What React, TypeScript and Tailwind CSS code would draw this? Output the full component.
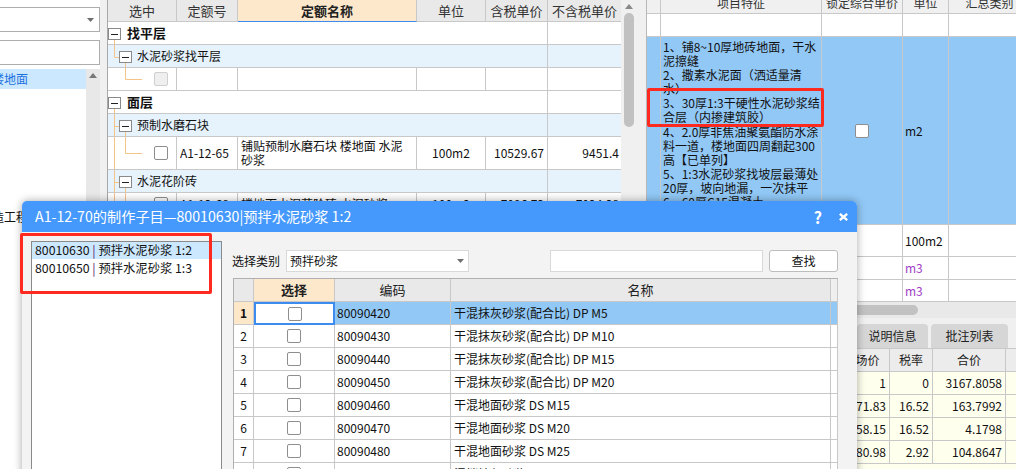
import React from "react"

const OR = "#f6c487"

function Check({ disabled = false }: { disabled?: boolean }) {
  return (
    <span
      className={`inline-block w-[14px] h-[14px] rounded-[2px] border shrink-0 ${
        disabled ? "border-[#cfcfcf] bg-[#efefef]" : "border-[#8e8e8e] bg-white"
      }`}
    />
  )
}

function Box({ x }: { x: number }) {
  return (
    <g>
      <rect x={x + 0.5} y={6.5} width={12} height={11} fill="#fff" stroke="#8a8a8a" />
      <line x1={x + 3} x2={x + 10} y1={12.5} y2={12.5} stroke="#222" />
    </g>
  )
}

function V({ x, y1, y2 }: { x: number; y1: number; y2: number }) {
  return <line x1={x} x2={x} y1={y1} y2={y2} stroke={OR} />
}
function H({ y, x1, x2 }: { y: number; x1: number; x2: number }) {
  return <line x1={x1} x2={x2} y1={y} y2={y} stroke={OR} />
}

function LeftPanel() {
  return (
    <div className="w-[100px] shrink-0 flex flex-col pt-[7px]">
      <div className="h-[25px] border border-l-0 border-[#adadad] flex items-center justify-end pr-[5px]">
        <svg width="7" height="4">
          <path d="M0 0h7L3.5 4z" fill="#6d6d6d" />
        </svg>
      </div>
      <div className="h-[25px] mt-[8px] border border-l-0 border-[#adadad]" />
      <div className="mt-[4px] flex flex-1 min-h-0">
        <div className="flex-1 flex flex-col overflow-hidden">
          <div className="h-[20px] bg-[#cce8ff] text-[#1a6fdc] leading-[20px] whitespace-nowrap -ml-[8px]">楼地面</div>
          <div className="h-[120px] shrink-0" />
          <div className="leading-[16px] whitespace-nowrap -ml-[8px]">造工程</div>
        </div>
        <div className="w-[14px] bg-[#e8e8e8] flex justify-center pt-[4px]">
          <svg width="8" height="5">
            <path d="M0 5h8L4 0z" fill="#777" />
          </svg>
        </div>
      </div>
    </div>
  )
}

function GroupRow({
  blue,
  bold,
  w,
  tree,
  label,
}: {
  blue?: boolean
  bold?: boolean
  w: number
  tree: React.ReactNode
  label: string
}) {
  return (
    <div className={`h-[23px] flex shrink-0 border-b border-[#c8c8c8] ${blue ? "bg-[#e6f3fd]" : "bg-white"}`}>
      <div className="w-[440px] flex items-center border-r border-[#c8c8c8]">
        <svg width={w} height={22} className="block shrink-0">
          {tree}
        </svg>
        <span className={bold ? "text-[13px] font-bold" : "text-[12px]"}>{label}</span>
      </div>
      <div className="w-[73px]" />
    </div>
  )
}

function LeafRow({
  h,
  tree,
  disabled,
  code,
  name,
  unit,
  p1,
  p2,
}: {
  h: number
  tree: React.ReactNode
  disabled?: boolean
  code?: string
  name?: React.ReactNode
  unit?: string
  p1?: string
  p2?: string
}) {
  const cell = "border-r border-[#c8c8c8] flex items-center"
  return (
    <div className="flex shrink-0 border-b border-[#c8c8c8] bg-white" style={{ height: h }}>
      <div className={`w-[69px] ${cell}`}>
        <svg width={46} height={h - 1} className="block shrink-0">
          {tree}
        </svg>
        <Check disabled={disabled} />
      </div>
      <div className={`w-[61px] ${cell} pl-[3px]`}>{code}</div>
      <div className={`w-[179px] ${cell} pl-[3px] leading-[14px]`}>{name}</div>
      <div className={`w-[69px] ${cell} justify-center`}>{unit}</div>
      <div className={`w-[62px] ${cell} justify-end pr-[3px]`}>{p1}</div>
      <div className="w-[73px] flex items-center justify-end pr-[2px] whitespace-nowrap overflow-hidden">{p2}</div>
    </div>
  )
}

function MidTable() {
  const hc = "h-full flex items-center justify-center border-r border-b border-[#c8c8c8] text-[13px] text-[#333]"
  return (
    <div className="w-[529px] shrink-0 flex">
      <div className="w-[514px] border-l border-[#a8a8a8] flex flex-col overflow-hidden">
        <div className="h-[22px] flex shrink-0 bg-[#e9e9e9]">
          <div className={`w-[69px] ${hc}`}>选中</div>
          <div className={`w-[61px] ${hc}`}>定额号</div>
          <div className="w-[179px] h-full flex items-center justify-center border-r border-[#c8c8c8] border-b border-b-[#3b8cf0] bg-[#fde8cc] text-[13px] font-bold text-[#222]">
            定额名称
          </div>
          <div className={`w-[69px] ${hc}`}>单位</div>
          <div className={`w-[62px] ${hc}`}>含税单价</div>
          <div className={`w-[73px] ${hc} border-r-0`}>不含税单价</div>
        </div>
        <GroupRow
          bold
          w={19}
          label="找平层"
          tree={
            <>
              <Box x={0} />
              <V x={6.5} y1={18} y2={22} />
            </>
          }
        />
        <GroupRow
          blue
          w={29}
          label="水泥砂浆找平层"
          tree={
            <>
              <V x={6.5} y1={0} y2={12.5} />
              <H y={12.5} x1={6.5} x2={11} />
              <Box x={11} />
              <V x={17.5} y1={18} y2={22} />
            </>
          }
        />
        <LeafRow
          h={23}
          disabled
          tree={
            <>
              <V x={17.5} y1={0} y2={11.5} />
              <H y={11.5} x1={17.5} x2={34} />
            </>
          }
        />
        <GroupRow
          bold
          w={19}
          label="面层"
          tree={
            <>
              <Box x={0} />
              <V x={6.5} y1={18} y2={22} />
            </>
          }
        />
        <GroupRow
          blue
          w={29}
          label="预制水磨石块"
          tree={
            <>
              <V x={6.5} y1={0} y2={22} />
              <H y={12.5} x1={6.5} x2={11} />
              <Box x={11} />
              <V x={17.5} y1={18} y2={22} />
            </>
          }
        />
        <LeafRow
          h={33}
          code="A1-12-65"
          name={
            <span>
              铺贴预制水磨石块 楼地面 水泥
              <br />
              砂浆
            </span>
          }
          unit="100m2"
          p1="10529.67"
          p2="9451.4"
          tree={
            <>
              <V x={6.5} y1={0} y2={32} />
              <V x={17.5} y1={0} y2={16.5} />
              <H y={16.5} x1={17.5} x2={34} />
            </>
          }
        />
        <GroupRow
          blue
          w={29}
          label="水泥花阶砖"
          tree={
            <>
              <V x={6.5} y1={0} y2={22} />
              <H y={12.5} x1={6.5} x2={11} />
              <Box x={11} />
              <V x={17.5} y1={18} y2={22} />
            </>
          }
        />
        <LeafRow
          h={23}
          code="A1-12-68"
          name="楼地面水泥花阶砖 水泥砂浆"
          unit="100m2"
          p1="7096.73"
          p2="7024.38"
          tree={
            <>
              <V x={6.5} y1={0} y2={22} />
              <V x={17.5} y1={0} y2={11.5} />
              <H y={11.5} x1={17.5} x2={34} />
            </>
          }
        />
      </div>
      <div className="w-[15px] bg-[#f0f0f0] flex flex-col items-center pt-[4px]">
        <svg width="8" height="5">
          <path d="M0 5h8L4 0z" fill="#888" />
        </svg>
        <div className="mt-[4px] w-[10px] h-[114px] rounded-full bg-[#c1c1c1]" />
      </div>
    </div>
  )
}

const specLines = [
  "1、铺8~10厚地砖地面，干水",
  "泥擦缝",
  "2、撒素水泥面（洒适量清",
  "水）",
  "3、30厚1:3干硬性水泥砂浆结",
  "合层（内掺建筑胶）",
  "4、2.0厚非焦油聚氨酯防水涂",
  "料一道，楼地面四周翻起300",
  "高【已单列】",
  "5、1:3水泥砂浆找坡层最薄处",
  "20厚，坡向地漏，一次抹平",
  "6、60厚C15混凝土",
  "7、素土夯实",
]

function RightPanel() {
  const c = "border-r border-[#c8c8c8] h-full"
  const bottom = [
    ["1", "0", "3167.8058"],
    ["71.83", "16.52", "163.7992"],
    ["58.15", "16.52", "4.1798"],
    ["80.98", "2.92", "104.8647"],
  ]
  return (
    <div className="w-[369px] shrink-0 flex flex-col overflow-hidden">
      <div className="w-[420px] flex flex-col">
        <div className="h-[14px] flex shrink-0 overflow-hidden bg-[#f0f0f0] border-b border-[#c8c8c8] text-[#333]">
          <div className={`w-[14px] ${c}`} />
          <div className={`w-[161px] ${c} text-center`}>
            <div className="-mt-[8px] leading-[22px]">项目特征</div>
          </div>
          <div className={`w-[81px] ${c} text-center`}>
            <div className="-mt-[8px] leading-[22px]">锁定综合单价</div>
          </div>
          <div className={`w-[46px] ${c} text-center`}>
            <div className="-mt-[8px] leading-[22px]">单位</div>
          </div>
          <div className={`w-[82px] ${c} text-center`}>
            <div className="-mt-[8px] leading-[22px]">汇总类别</div>
          </div>
        </div>
        <div className="h-[23px] flex shrink-0 border-b border-[#c8c8c8]">
          <div className={`w-[14px] ${c}`} />
          <div className={`w-[161px] ${c}`} />
          <div className={`w-[81px] ${c}`} />
          <div className={`w-[46px] ${c}`} />
          <div className={`w-[82px] ${c}`} />
        </div>
        <div className="h-[188px] flex shrink-0 bg-[#91c8f6] border-b border-[#c8c8c8] overflow-hidden">
          <div className={`w-[14px] ${c}`} />
          <div className={`w-[161px] ${c} pl-[2px] pt-[3px] leading-[14.1px] text-[#111] overflow-hidden`}>
            {specLines.map((l) => (
              <div key={l} className="whitespace-nowrap">
                {l}
              </div>
            ))}
          </div>
          <div className={`w-[81px] ${c} flex items-center justify-center`}>
            <Check />
          </div>
          <div className={`w-[46px] ${c} flex items-center pl-[2px]`}>m2</div>
          <div className={`w-[82px] ${c}`} />
        </div>
        <div className="h-[32px] flex shrink-0 border-b border-[#c8c8c8]">
          <div className={`w-[14px] ${c}`} />
          <div className={`w-[161px] ${c}`} />
          <div className={`w-[81px] ${c}`} />
          <div className={`w-[46px] ${c} flex items-center pl-[2px]`}>100m2</div>
          <div className={`w-[82px] ${c}`} />
        </div>
        {[23, 22].map((h, i) => (
          <div key={i} className="flex shrink-0 border-b border-[#c8c8c8]" style={{ height: h }}>
            <div className={`w-[14px] ${c}`} />
            <div className={`w-[161px] ${c}`} />
            <div className={`w-[81px] ${c}`} />
            <div className={`w-[46px] ${c} flex items-center pl-[2px] text-[#a23ec6]`}>m3</div>
            <div className={`w-[82px] ${c}`} />
          </div>
        ))}
        <div className="h-[16px] shrink-0 bg-[#e9e9e9] pt-[3px]">
          <div className="ml-[50px] w-[221px] h-[10px] rounded-full bg-[#c2c2c2]" />
        </div>
        <div className="h-[151px] bg-[#f0f0f0] flex flex-col">
          <div className="mt-[6px] h-[24px] flex shrink-0 pl-[210px] gap-[3px] text-[#222]">
            <div className="w-[71px] rounded-t-[4px] bg-[#d6d6d6] flex items-center justify-center">说明信息</div>
            <div className="w-[77px] rounded-t-[4px] bg-[#d6d6d6] flex items-center justify-center">批注列表</div>
          </div>
          <div className="h-[24px] flex shrink-0 bg-[#ececec] border-t border-b border-[#c8c8c8] text-[#222]">
            <div className={`w-[187px] ${c}`} />
            <div className={`w-[56px] ${c} flex items-center justify-center`}>市场价</div>
            <div className={`w-[43px] ${c} flex items-center justify-center`}>税率</div>
            <div className={`w-[73px] ${c} flex items-center justify-center`}>合价</div>
            <div className={`w-[40px] ${c}`} />
          </div>
          {bottom.map((r, i) => (
            <div key={i} className="h-[23px] flex shrink-0 bg-[#ffffee] border-b border-[#c8c8c8]">
              <div className={`w-[187px] ${c}`} />
              <div className={`w-[56px] ${c} flex items-center justify-end pr-[3px]`}>{r[0]}</div>
              <div className={`w-[43px] ${c} flex items-center justify-end pr-[3px]`}>{r[1]}</div>
              <div className={`w-[73px] ${c} flex items-center justify-end pr-[3px]`}>{r[2]}</div>
              <div className={`w-[40px] ${c}`} />
            </div>
          ))}
          <div className="flex-1 bg-[#ffffee]" />
        </div>
      </div>
    </div>
  )
}

const mats = [
  ["80090420", "干混抹灰砂浆(配合比) DP M5"],
  ["80090430", "干混抹灰砂浆(配合比) DP M10"],
  ["80090440", "干混抹灰砂浆(配合比) DP M15"],
  ["80090450", "干混抹灰砂浆(配合比) DP M20"],
  ["80090460", "干混地面砂浆 DS M15"],
  ["80090470", "干混地面砂浆 DS M20"],
  ["80090480", "干混地面砂浆 DS M25"],
  ["80090490", "湿拌抹灰砂浆 WP M5"],
]

function Dialog() {
  const c = "h-full flex items-center border-r border-b border-[#c8c8c8]"
  return (
    <div className="absolute left-[22px] top-[201px] w-[835px] h-[290px] flex flex-col rounded-t-[5px] bg-[#f3f3f3] shadow-[0_0_8px_rgba(0,0,0,0.35)]">
      <div className="h-[31px] shrink-0 rounded-t-[5px] bg-[#4599fd] flex items-center pl-[13px] pr-[9px] text-white">
        <div className="flex-1 text-[14.2px] leading-[31px] whitespace-nowrap">A1-12-70的制作子目—80010630|预拌水泥砂浆 1:2</div>
        <div className="text-[16px] font-bold leading-none mr-[17px]">?</div>
        <svg width="9" height="8" className="block">
          <path d="M0.8 0.8L8.2 7.2M8.2 0.8L0.8 7.2" stroke="#fff" strokeWidth="2.3" />
        </svg>
      </div>
      <div className="flex flex-1 min-h-0">
        <div className="ml-[9px] mt-[9px] w-[191px] bg-white border border-[#8a8a8a] flex flex-col text-[12.3px]">
          <div className="h-[17px] leading-[17px] pl-[3px] bg-[#cce8ff] whitespace-nowrap">
            80010630 <span className="text-[#5a1565]">|</span> 预拌水泥砂浆 1:2
          </div>
          <div className="h-[18px] leading-[18px] pl-[3px] whitespace-nowrap">
            80010650 <span className="text-[#5a1565]">|</span> 预拌水泥砂浆 1:3
          </div>
        </div>
        <div className="ml-[10px] flex flex-col">
          <div className="mt-[18px] h-[22px] flex items-center">
            <div className="w-[54px]">选择类别</div>
            <div className="w-[183px] h-[22px] bg-white border border-[#d9d9d9] flex items-center justify-between pl-[3px] pr-[4px]">
              <span>预拌砂浆</span>
              <svg width="7" height="4">
                <path d="M0 0h7L3.5 4z" fill="#707070" />
              </svg>
            </div>
            <div className="ml-[81px] w-[213px] h-[22px] bg-white border border-[#d9d9d9]" />
            <div className="ml-[6px] w-[69px] h-[22px] bg-white border border-[#bdbdbd] rounded-[3px] flex items-center justify-center">
              查找
            </div>
          </div>
          <div className="mt-[6px] ml-[1px] w-[605px] border-t border-l border-[#b0b0b0] bg-white flex flex-col">
            <div className="h-[23px] flex shrink-0 bg-[#e9e9e9] text-[13px] text-[#222]">
              <div className={`w-[20px] ${c}`} />
              <div className={`w-[81px] ${c} justify-center bg-[#fde8cc] font-bold`}>选择</div>
              <div className={`w-[116px] ${c} justify-center`}>编码</div>
              <div className={`w-[380px] ${c} justify-center`}>名称</div>
              <div className={`w-[7px] ${c} bg-[#efefef]`} />
            </div>
            {mats.map(([code, name], i) => {
              const sel = i === 0
              return (
                <div key={code} className={`h-[23px] flex shrink-0 ${sel ? "bg-[#91c8f6]" : "bg-white"}`}>
                  <div
                    className={`w-[20px] ${c} justify-center ${sel ? "bg-[#fde7c9] font-bold" : "bg-white"}`}
                  >
                    {i + 1}
                  </div>
                  {sel ? (
                    <div className="w-[81px] h-full flex items-center justify-center bg-white border-2 border-[#3c8cf0]">
                      <Check />
                    </div>
                  ) : (
                    <div className={`w-[81px] ${c} justify-center`}>
                      <Check />
                    </div>
                  )}
                  <div className={`w-[116px] ${c} pl-[2px]`}>{code}</div>
                  <div className={`w-[380px] ${c} pl-[3px] whitespace-nowrap`}>{name}</div>
                  <div className={`w-[7px] ${c}`} />
                </div>
              )
            })}
          </div>
        </div>
      </div>
    </div>
  )
}

export default function App() {
  return (
    <div className="relative w-[1016px] h-[469px] overflow-hidden bg-white flex font-['Noto_Sans_CJK_SC','Noto_Sans',sans-serif] text-[12px] text-[#111]">
      <LeftPanel />
      <div className="w-[7px] shrink-0 bg-[#f0f0f0]" />
      <MidTable />
      <div className="w-[11px] shrink-0 bg-[#f0f0f0] border-r border-[#b8b8b8]" />
      <RightPanel />
      <Dialog />
      <div className="absolute left-[647px] top-[88px] w-[177px] h-[39px] border-[3px] border-[#ff2a1f] rounded-[2px]" />
      <div className="absolute left-[20px] top-[233px] w-[192px] h-[61px] border-[3px] border-[#ff2a1f] rounded-[2px]" />
    </div>
  )
}
